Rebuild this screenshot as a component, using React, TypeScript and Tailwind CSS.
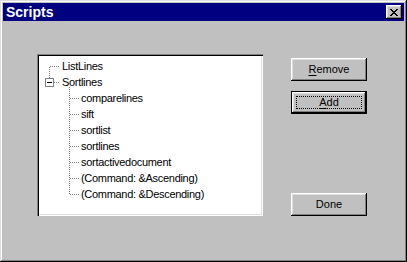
import React from "react";

const font = { fontFamily: '"Liberation Sans", Arial, sans-serif' };

function Btn({ label, u, def }: { label: string; u: number; def?: boolean }) {
  const text = (
    <span>
      {label.slice(0, u)}
      <span className="underline underline-offset-2">{label[u]}</span>
      {label.slice(u + 1)}
    </span>
  );
  if (def) {
    return (
      <div className="w-[76px] h-[23px] bg-black p-px">
        <div className="w-full h-full bg-[#c0c0c0] shadow-[inset_-1px_-1px_#000,inset_1px_1px_#fff,inset_-2px_-2px_#808080,inset_2px_2px_#dfdfdf] p-[4px] flex">
          <div className="flex-1 border border-dotted border-black flex items-center justify-center text-[11px] text-black leading-none">
            {text}
          </div>
        </div>
      </div>
    );
  }
  return (
    <div className="w-[76px] h-[23px] bg-[#c0c0c0] shadow-[inset_-1px_-1px_#000,inset_1px_1px_#fff,inset_-2px_-2px_#808080,inset_2px_2px_#dfdfdf] flex items-center justify-center text-[11px] text-black leading-none">
      {u >= 0 ? text : label}
    </div>
  );
}

const rows = [
  { t: "ListLines", l: 0 },
  { t: "Sortlines", l: 0 },
  { t: "comparelines", l: 1 },
  { t: "sift", l: 1 },
  { t: "sortlist", l: 1 },
  { t: "sortlines", l: 1 },
  { t: "sortactivedocument", l: 1 },
  { t: "(Command: &Ascending)", l: 1 },
  { t: "(Command: &Descending)", l: 1 },
];

function TreeLines() {
  const dot = { stroke: "#808080", strokeWidth: 1, strokeDasharray: "1 1", shapeRendering: "crispEdges" as const };
  const childCenters = [42, 58, 74, 90, 106, 122, 138];
  return (
    <svg className="absolute left-0 top-0" width="224" height="160">
      <line x1="10.5" y1="11" x2="10.5" y2="22" {...dot} />
      <line x1="11" y1="10.5" x2="21" y2="10.5" {...dot} />
      <line x1="15" y1="26.5" x2="21" y2="26.5" {...dot} />
      <rect x="6.5" y="22.5" width="8" height="8" fill="#fff" stroke="#808080" shapeRendering="crispEdges" />
      <rect x="8" y="26" width="5" height="1" fill="#000" />
      <line x1="30.5" y1="31" x2="30.5" y2="138" {...dot} />
      {childCenters.map((c) => (
        <line key={c} x1="31" y1={c + 0.5} x2="40" y2={c + 0.5} {...dot} />
      ))}
    </svg>
  );
}

export default function App() {
  return (
    <div style={font} className="w-[407px] h-[262px] bg-[#c0c0c0] p-[3px] flex flex-col shadow-[inset_-1px_-1px_#000,inset_1px_1px_#dfdfdf,inset_-2px_-2px_#808080,inset_2px_2px_#fff]">
      <div className="h-[18px] bg-[#000080] flex items-center justify-between pl-[3px] pr-[2px]">
        <span className="text-white font-bold text-[14px] leading-none">Scripts</span>
        <div className="w-[16px] h-[14px] bg-[#c0c0c0] shadow-[inset_-1px_-1px_#000,inset_1px_1px_#fff,inset_-2px_-2px_#808080,inset_2px_2px_#dfdfdf] flex items-center justify-center">
          <svg width="8" height="7" shapeRendering="crispEdges">
            <path d="M0 0h2v1h-2zM6 0h2v1h-2zM1 1h2v1h-2zM5 1h2v1h-2zM2 2h4v1h-4zM3 3h2v1h-2zM2 4h4v1h-4zM1 5h2v1h-2zM5 5h2v1h-2zM0 6h2v1h-2zM6 6h2v1h-2z" fill="#000" />
          </svg>
        </div>
      </div>
      <div className="flex pl-[34px] pt-[33px]">
        <div className="w-[226px] h-[162px] bg-white p-[2px] shadow-[inset_1px_1px_#808080,inset_2px_2px_#000,inset_-1px_-1px_#fff,inset_-2px_-2px_#dfdfdf]">
          <div className="relative w-full h-full pt-[2px]">
            <TreeLines />
            {rows.map((r) => (
              <div
                key={r.t}
                className={`h-[16px] flex items-center text-[11px] text-black tracking-[-0.3px] ${r.l === 0 ? "pl-[23px]" : "pl-[42px]"}`}
              >
                {r.t}
              </div>
            ))}
          </div>
        </div>
        <div className="ml-[28px] pt-[4px] flex flex-col">
          <Btn label="Remove" u={0} />
          <div className="h-[10px]" />
          <Btn label="Add" u={0} def />
          <div className="h-[79px]" />
          <Btn label="Done" u={-1} />
        </div>
      </div>
    </div>
  );
}
